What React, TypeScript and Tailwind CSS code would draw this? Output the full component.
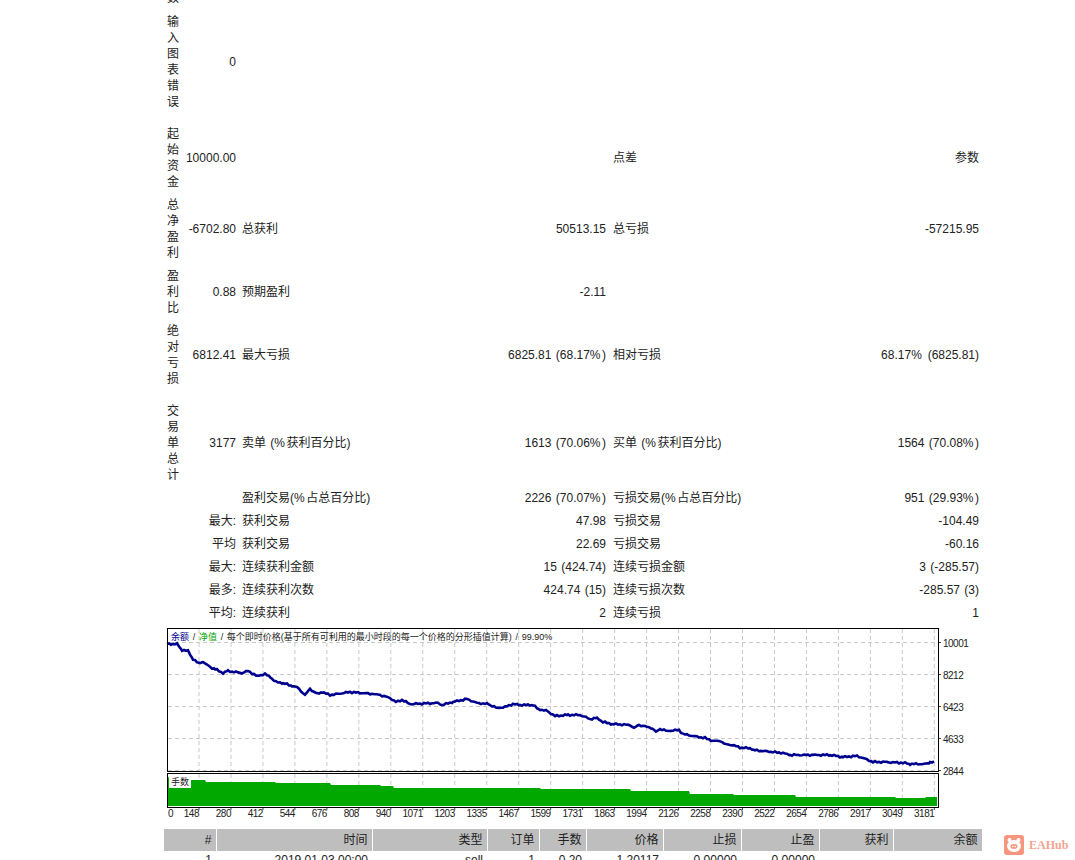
import React from 'react'

const FONT = "[font-family:'Liberation_Sans','Noto_Sans_CJK_SC',sans-serif]"

const equity: [number, number][] = [
  [167, 644], [177, 644], [182, 650], [188, 651], [193, 659], [198, 663], [203, 662], [210, 667], [215, 669], [223, 673],
  [228, 671], [242, 673], [248, 671], [257, 676], [265, 674], [270, 677], [276, 682], [283, 683], [292, 686], [297, 687],
  [305, 695], [310, 689], [317, 694], [322, 692], [330, 695], [350, 692], [373, 694], [380, 695], [390, 698], [396, 702],
  [402, 700], [410, 704], [438, 703], [442, 705], [453, 702], [467, 699], [477, 703], [488, 704], [497, 708], [505, 707],
  [513, 704], [520, 705], [533, 705], [538, 709], [547, 711], [555, 716], [568, 715], [580, 715], [590, 719], [597, 718],
  [603, 722], [612, 724], [630, 725], [634, 728], [639, 725], [652, 728], [656, 732], [660, 729], [667, 731], [679, 730],
  [683, 734], [693, 736], [705, 738], [713, 741], [721, 741], [724, 744], [732, 745], [742, 748], [750, 748], [753, 750],
  [773, 752], [783, 753], [790, 755], [813, 755], [830, 755], [843, 757], [857, 756], [863, 758], [873, 762], [885, 762],
  [905, 763], [910, 764], [927, 764], [930, 762], [936, 762],
]

// the balance line is jagged in the report, so add a little fixed noise between the points
function jagged(points: [number, number][]): string {
  const out: string[] = []
  for (let i = 0; i < points.length - 1; i++) {
    const [x1, y1] = points[i]
    const [x2, y2] = points[i + 1]
    for (let x = x1; x < x2; x += 2) {
      const y = y1 + (y2 - y1) * (x - x1) / (x2 - x1)
      const noise = Math.sin(x * 1.7) * 0.5 + Math.sin(x * 0.63) * 0.4
      out.push(`${x},${(y + noise).toFixed(1)}`)
    }
  }
  return out.join(' ')
}

const volumeShape = "168,806 168,777 172,780 205,780 206,782 275,782 276,783 330,783 331,785 380,785 381,786 393,786 394,788 540,788 541,789 630,789 631,791 689,791 690,794 733,794 734,795 795,795 796,797 895,797 896,798 925,798 926,797 937,797 937,806"

const xLabels = ['148', '280', '412', '544', '676', '808', '940', '1071', '1203', '1335', '1467', '1599', '1731', '1863', '1994', '2126', '2258', '2390', '2522', '2654', '2786', '2917', '3049', '3181']
const yLabels = ['10001', '8212', '6423', '4633', '2844']
const gridX = Array.from({ length: 24 }, (_, i) => 199 + i * 31.97)
const gridY = [642, 674, 706, 738, 770]

type Row = { stack?: string, head?: string, a?: string, b?: string, c?: string, d?: string, gap: string, h: string }

const rows: Row[] = [
  { stack: '数', gap: 'mt-[-10px]', h: '' },
  { stack: '输入图表错误', head: '0', gap: 'mt-[8px]', h: '' },
  { stack: '起始资金', head: '10000.00', c: '点差', d: '参数', gap: 'mt-[16px]', h: '' },
  { stack: '总净盈利', head: '-6702.80', a: '总获利', b: '50513.15', c: '总亏损', d: '-57215.95', gap: 'mt-[7px]', h: '' },
  { stack: '盈利比', head: '0.88', a: '预期盈利', b: '-2.11', gap: 'mt-[7px]', h: '' },
  { stack: '绝对亏损', head: '6812.41', a: '最大亏损', b: '6825.81 (68.17%)', c: '相对亏损', d: '68.17% (6825.81)', gap: 'mt-[7px]', h: '' },
  { stack: '交易单总计', head: '3177', a: '卖单 (%获利百分比)', b: '1613 (70.06%)', c: '买单 (%获利百分比)', d: '1564 (70.08%)', gap: 'mt-[16px]', h: '' },
  { a: '盈利交易(%占总百分比)', b: '2226 (70.07%)', c: '亏损交易(%占总百分比)', d: '951 (29.93%)', gap: 'mt-[3px]', h: 'h-[23px]' },
  { head: '最大:', a: '获利交易', b: '47.98', c: '亏损交易', d: '-104.49', gap: '', h: 'h-[23px]' },
  { head: '平均', a: '获利交易', b: '22.69', c: '亏损交易', d: '-60.16', gap: '', h: 'h-[23px]' },
  { head: '最大:', a: '连续获利金额', b: '15 (424.74)', c: '连续亏损金额', d: '3 (-285.57)', gap: '', h: 'h-[23px]' },
  { head: '最多:', a: '连续获利次数', b: '424.74 (15)', c: '连续亏损次数', d: '-285.57 (3)', gap: '', h: 'h-[23px]' },
  { head: '平均:', a: '连续获利', b: '2', c: '连续亏损', d: '1', gap: '', h: 'h-[23px]' },
]

// the % sign is wider in the report's font
function Pct({ text }: { text?: string }): React.JSX.Element | null {
  if (!text) return null
  const parts = text.split('%')
  return (
    <>
      {parts.map((p, i) => (
        <React.Fragment key={i}>
          {p}
          {i < parts.length - 1 && <span className="tracking-[1.5px]">%</span>}
        </React.Fragment>
      ))}
    </>
  )
}

function StatRow({ row }: { row: Row }): React.JSX.Element {
  return (
    <div className={`grid grid-cols-[12px_57px_186px_184px_187px_186px] items-center [word-spacing:1px] ${row.gap} ${row.h}`}>
      <div>{row.stack && <div className="w-[12px] break-all text-center leading-4">{row.stack}</div>}</div>
      <div className="text-right whitespace-nowrap">{row.head}</div>
      <div className="pl-[6px] whitespace-nowrap"><Pct text={row.a} /></div>
      <div className="text-right whitespace-nowrap"><Pct text={row.b} /></div>
      <div className="pl-[7px] whitespace-nowrap"><Pct text={row.c} /></div>
      <div className="text-right whitespace-nowrap"><Pct text={row.d} /></div>
    </div>
  )
}

function Chart(): React.JSX.Element {
  return (
    <div className="mt-[4px] ml-[3px] flex">
      <div className="w-[772px] shrink-0">
        <div className="relative h-[144px]">
          <svg viewBox="167 628 772 144" className="block h-[144px] w-[772px] overflow-visible">
            {gridY.map(y => <line key={y} x1="168" x2="938" y1={y + 0.5} y2={y + 0.5} stroke="#c8c8c8" strokeDasharray="4 3" />)}
            {gridX.map(x => <line key={x} x1={x} x2={x} y1="629" y2="771" stroke="#c8c8c8" strokeDasharray="4 3" />)}
            <polyline points={jagged(equity)} fill="none" stroke="#00008f" strokeWidth="2.6" />
            <rect x="167.5" y="628.5" width="771" height="143" fill="none" stroke="#000" />
            {gridY.map(y => <line key={y} x1="939" x2="941" y1={y + 0.5} y2={y + 0.5} stroke="#444" />)}
          </svg>
          <div className="absolute left-[4px] top-[3px] text-[9px] leading-[13px] whitespace-nowrap text-[#222] [word-spacing:1.2px]">
            <span className="text-[#00008f]">余额</span> / <span className="text-[#00a800]">净值</span> / 每个即时价格(基于所有可利用的最小时段的每一个价格的分形插值计算) / 99.90%
          </div>
        </div>
        <div className="relative mt-[1px] h-[35px]">
          <svg viewBox="167 773 772 35" className="block h-[35px] w-[772px] overflow-visible">
            {gridX.map(x => <line key={x} x1={x} x2={x} y1="774" y2="806" stroke="#c8c8c8" strokeDasharray="4 3" />)}
            <polygon points={volumeShape} fill="#00a800" />
            <rect x="167.5" y="773.5" width="771" height="34" fill="none" stroke="#000" />
            {gridX.map(x => <line key={x} x1={x} x2={x} y1="808" y2="810" stroke="#444" />)}
          </svg>
          <div className="absolute left-[2px] top-[4px] bg-white px-[2px] text-[9px] leading-[11px]">手数</div>
        </div>
        <div className="flex h-[11px] items-center text-[10px] leading-none tracking-[-0.5px]">
          <div className="flex w-[32px] shrink-0 justify-between">
            <span className="pl-[1px]">0</span>
            <span>{xLabels[0]}</span>
          </div>
          {xLabels.slice(1).map(l => <div key={l} className="w-[31.97px] shrink-0 text-right">{l}</div>)}
        </div>
      </div>
      <div className="ml-[4px] flex flex-col pt-[10px] text-[10px] leading-[12px] tracking-[-0.5px]">
        {yLabels.map(l => <div key={l} className="h-[32px] shrink-0">{l}</div>)}
      </div>
    </div>
  )
}

const columns = [
  { w: 'w-[52px]', h: '#', v: '1' },
  { w: 'w-[156px]', h: '时间', v: '2019.01.03 00:00' },
  { w: 'w-[115px]', h: '类型', v: 'sell' },
  { w: 'w-[52px]', h: '订单', v: '1' },
  { w: 'w-[47px]', h: '手数', v: '0.20' },
  { w: 'w-[77px]', h: '价格', v: '1.20117' },
  { w: 'w-[78px]', h: '止损', v: '0.00000' },
  { w: 'w-[78px]', h: '止盈', v: '0.00000' },
  { w: 'w-[74px]', h: '获利', v: '' },
  { w: 'w-[89px]', h: '余额', v: '' },
]

function Trades(): React.JSX.Element {
  return (
    <table className="mt-[10px] table-fixed border-collapse">
      <thead>
        <tr>
          {columns.map(c => (
            <th key={c.h} className={`${c.w} h-[22px] border-r border-white bg-[#bebebe] pr-[4px] text-right text-[12px] font-normal`}>{c.h}</th>
          ))}
        </tr>
      </thead>
      <tbody>
        <tr>
          {columns.map(c => <td key={c.h} className="h-[18px] pr-[4px] text-right text-[12px]">{c.v}</td>)}
        </tr>
      </tbody>
    </table>
  )
}

function Watermark(): React.JSX.Element {
  return (
    <div className="absolute left-[1004px] top-[835px] flex items-center gap-[5px]">
      <svg viewBox="0 0 20 20" className="h-[20px] w-[20px]">
        <rect width="20" height="20" rx="3" fill="#f7967f" />
        <circle cx="5.5" cy="5" r="2" fill="#fff" />
        <circle cx="14.5" cy="5" r="2" fill="#fff" />
        <ellipse cx="10" cy="11" rx="7" ry="6" fill="#fff" />
        <ellipse cx="10" cy="11.5" rx="3.6" ry="2.4" fill="#f7967f" />
        <circle cx="8.7" cy="11.5" r="0.8" fill="#fff" />
        <circle cx="11.3" cy="11.5" r="0.8" fill="#fff" />
      </svg>
      <span className="font-['Liberation_Serif',serif] text-[12px] font-bold text-[#f4a592]">EAHub</span>
    </div>
  )
}

export default function App(): React.JSX.Element {
  return (
    <div className={`relative h-[860px] overflow-hidden bg-white pl-[164px] text-[12px] leading-4 text-[#222] ${FONT}`}>
      <div className="ml-[3px]">
        {rows.map((r, i) => <StatRow key={i} row={r} />)}
      </div>
      <Chart />
      <Trades />
      <Watermark />
    </div>
  )
}
